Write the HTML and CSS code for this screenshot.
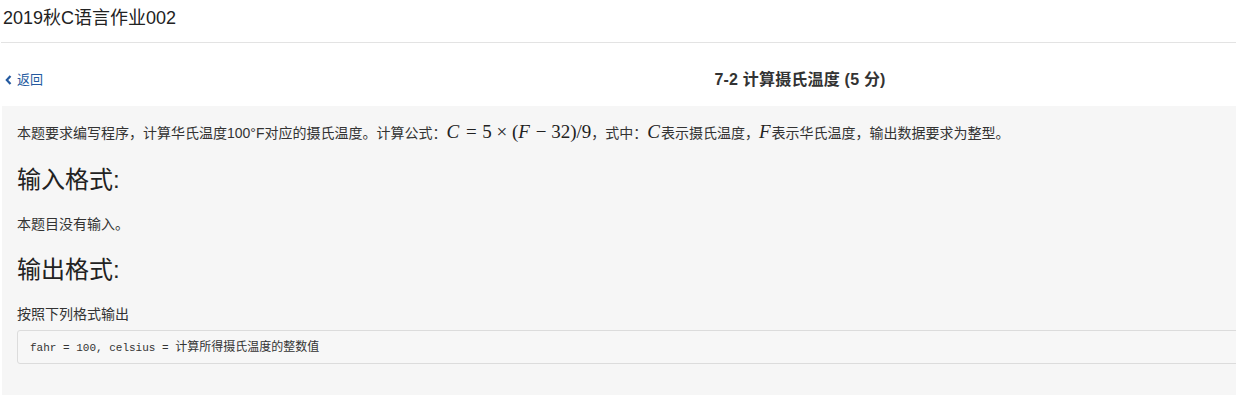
FILE: index.html
```html
<!DOCTYPE html>
<html lang="zh-CN">
<head>
<meta charset="utf-8">
<title>2019秋C语言作业002</title>
<link rel="stylesheet" href="styles.css">
</head>
<body>
<div class="page">
  <div class="set-title">2019秋C语言作业002</div>
  <div class="problem-header">
    <a class="back" href="#"><svg class="chev" width="7" height="10" viewBox="0 0 7 10"><path d="M5.5 1 L1.8 5 L5.5 9" fill="none" stroke="currentColor" stroke-width="2.2"/></svg>返回</a>
    <div class="problem-title">7-2 计算摄氏温度 (5 分)</div>
    <div></div>
  </div>
  <div class="panel">
    <p class="desc">本题要求编写程序，计算华氏温度100°F对应的摄氏温度。计算公式：<span class="math"><i>C</i><span class="rel">=</span>5<span class="bin">×</span>(<i>F</i><span class="bin">−</span>32)/9</span>，式中：<span class="math"><i>C</i></span>表示摄氏温度，<span class="math"><i>F</i></span>表示华氏温度，输出数据要求为整型。</p>
    <h3 class="sec">输入格式:</h3>
    <p class="para">本题目没有输入。</p>
    <h3 class="sec">输出格式:</h3>
    <p class="para">按照下列格式输出</p>
    <pre class="code">fahr = 100, celsius = <span class="cjk">计算所得摄氏温度的整数值</span></pre>
  </div>
</div>
</body>
</html>
```

FILE: styles.css
```css
html, body {
  margin: 0;
  padding: 0;
  overflow: hidden;
  background: #fff;
}
body {
  font-family: "Liberation Sans", "Noto Sans CJK SC", sans-serif;
  color: #333;
  font-size: 14px;
}
.page {
  width: 1600px;
}
.set-title {
  font-size: 18px;
  line-height: 24px;
  padding: 6px 0 12px 2px;
  border-bottom: 1px solid #e3e3e3;
  color: #222;
  margin-left: 1px;
}
.problem-header {
  display: grid;
  grid-template-columns: 1fr auto 1fr;
  align-items: center;
  padding: 27px 0 16px 0;
  line-height: 20px;
}
.back {
  color: #245aa0;
  text-decoration: none;
  font-size: 13px;
  padding-left: 5px;
  display: flex;
  align-items: center;
  gap: 5px;
}
.chev {
  display: block;
}
.problem-title {
  font-size: 16px;
  font-weight: bold;
  color: #333;
  letter-spacing: 0.2px;
}
.panel {
  margin-left: 2px;
  background: #f6f6f6;
  padding: 16px 15px 31px 15px;
}
.desc {
  margin: 0;
  line-height: 20px;
}
.math {
  font-family: "Liberation Serif", "DejaVu Serif", serif;
  font-size: 19px;
  line-height: 1;
  color: #222;
}
.math i {
  margin-right: 1px;
}
.rel {
  margin: 0 0.3em;
}
.bin {
  margin: 0 0.25em;
}
.sec {
  font-size: 24px;
  font-weight: normal;
  line-height: 32px;
  margin: 21px 0 18px 0;
  color: #222;
}
.sec + .para + .sec {
  margin-top: 20px;
}
.para {
  margin: 0;
  line-height: 20px;
}
.para + .code {
  margin-top: 6px;
}
.code {
  margin: 0;
  background: #f7f7f7;
  border: 1px solid #dcdcdc;
  border-radius: 3px;
  padding: 8px 12px;
  font-family: "Liberation Mono", "DejaVu Sans Mono", monospace;
  font-size: 11px;
  line-height: 14px;
  color: #333;
}
.code .cjk {
  font-family: "Noto Sans CJK SC", sans-serif;
  font-size: 12px;
}
```
